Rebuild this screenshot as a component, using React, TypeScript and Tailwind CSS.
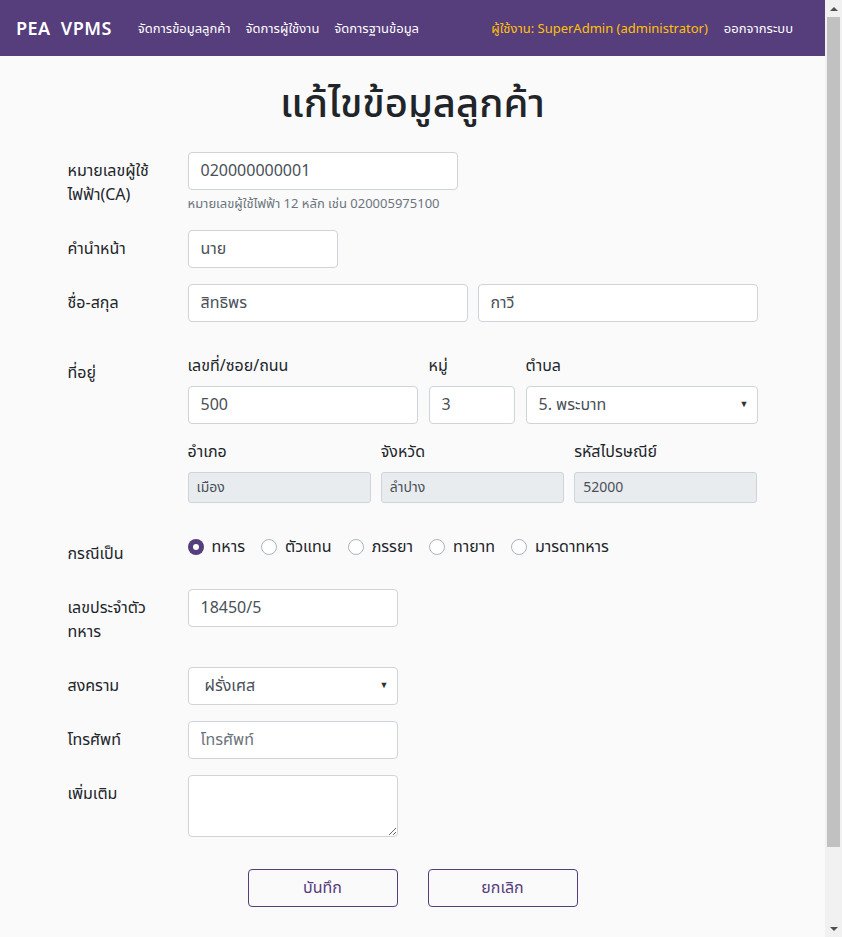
import React from 'react';

const font = { fontFamily: '"Noto Sans Thai", "Noto Sans", "Liberation Sans", sans-serif' };

const inputCls =
  'block w-full h-[38px] px-3 text-[16px] text-[#495057] bg-white border border-[#ced4da] rounded-[4px] outline-none';

function Label({ children }: { children: React.ReactNode }) {
  return <label className="w-[120px] shrink-0 px-[15px] pt-[7px] pb-[7px] text-[16px] leading-6 text-[#212529]">{children}</label>;
}

function Radio({ label, checked }: { label: string; checked?: boolean }) {
  return (
    <label className="flex items-center mr-4">
      {checked ? (
        <span className="w-4 h-4 rounded-full bg-[#563d7c] flex items-center justify-center">
          <span className="w-[6px] h-[6px] rounded-full bg-white" />
        </span>
      ) : (
        <span className="w-4 h-4 rounded-full bg-white border border-[#adb5bd]" />
      )}
      <span className="ml-2 text-[16px] leading-6 text-[#212529]">{label}</span>
    </label>
  );
}

function Select({ value, pad = 'pl-4' }: { value: string; pad?: string }) {
  return (
    <div className="relative">
      <div className={inputCls + ' flex items-center ' + pad}>{value}</div>
      <span className="absolute right-[9px] top-[12px] text-[9px] text-[#333]">▼</span>
    </div>
  );
}

function Scrollbar() {
  return (
    <div className="w-[17px] shrink-0 h-screen bg-[#f1f1f1] flex flex-col items-center">
      <div className="h-[17px] flex items-center justify-center">
        <div className="w-0 h-0 border-l-[4px] border-r-[4px] border-b-[4px] border-l-transparent border-r-transparent border-b-[#505050]" />
      </div>
      <div className="w-[13px] h-[830px] bg-[#c1c1c1]" />
      <div className="flex-1" />
      <div className="h-[17px] flex items-center justify-center">
        <div className="w-0 h-0 border-l-[4px] border-r-[4px] border-t-[4px] border-l-transparent border-r-transparent border-t-[#505050]" />
      </div>
    </div>
  );
}

export default function App() {
  return (
    <div className="flex h-screen overflow-hidden" style={font}>
      <div className="flex-1 min-w-0 bg-[#fafafa] overflow-hidden">
        <nav className="h-14 bg-[#563d7c] flex items-center px-4 pt-[3px]">
          <span className="text-white text-[18px] font-semibold tracking-wide mr-[26px]">PEA&nbsp; VPMS</span>
          <div className="flex gap-[15px] text-[13px] text-white">
            <span>จัดการข้อมูลลูกค้า</span>
            <span>จัดการผู้ใช้งาน</span>
            <span>จัดการฐานข้อมูล</span>
          </div>
          <div className="ml-auto flex gap-4 text-[13px] mr-4">
            <span className="text-[#ffc107]">ผู้ใช้งาน: SuperAdmin (administrator)</span>
            <span className="text-white">ออกจากระบบ</span>
          </div>
        </nav>

        <div className="w-[720px] mx-auto">
          <h1 className="text-center text-[40px] leading-[48px] font-medium text-[#212529] mt-[25px] mb-[23px]">
            แก้ไขข้อมูลลูกค้า
          </h1>

          <div className="flex mb-4">
            <Label>หมายเลขผู้ใช้ไฟฟ้า(CA)</Label>
            <div className="flex-1 px-[15px]">
              <div className="w-[270px]">
                <input className={inputCls} defaultValue="020000000001" />
              </div>
              <p className="mt-1 text-[13px] leading-5 text-[#6c757d]">หมายเลขผู้ใช้ไฟฟ้า 12 หลัก เช่น 020005975100</p>
            </div>
          </div>

          <div className="flex mb-4">
            <Label>คำนำหน้า</Label>
            <div className="flex-1 px-[15px]">
              <input className={inputCls + ' !w-[150px]'} defaultValue="นาย" />
            </div>
          </div>

          <div className="flex mb-8">
            <Label>ชื่อ-สกุล</Label>
            <div className="flex-1 px-[15px] grid grid-cols-2 gap-[10px]">
              <input className={inputCls} defaultValue="สิทธิพร" />
              <input className={inputCls} defaultValue="กาวี" />
            </div>
          </div>

          <div className="flex mb-8">
            <Label>ที่อยู่</Label>
            <div className="flex-1 px-[15px]">
              <div className="grid grid-cols-[230px_86px_1fr] gap-x-[11px]">
                <div>
                  <div className="text-[16px] leading-6 mb-2 text-[#212529]">เลขที่/ซอย/ถนน</div>
                  <input className={inputCls} defaultValue="500" />
                </div>
                <div>
                  <div className="text-[16px] leading-6 mb-2 text-[#212529]">หมู่</div>
                  <input className={inputCls} defaultValue="3" />
                </div>
                <div>
                  <div className="text-[16px] leading-6 mb-2 text-[#212529]">ตำบล</div>
                  <Select value="5. พระบาท" pad="pl-3" />
                </div>
              </div>
              <div className="grid grid-cols-3 gap-x-[10px] mt-4">
                {[
                  ['อำเภอ', 'เมือง'],
                  ['จังหวัด', 'ลำปาง'],
                  ['รหัสไปรษณีย์', '52000'],
                ].map(([l, v]) => (
                  <div key={l}>
                    <div className="text-[16px] leading-6 mb-2 text-[#212529]">{l}</div>
                    <div className="h-[31px] px-2 flex items-center text-[14px] text-[#495057] bg-[#e9ecef] border border-[#ced4da] rounded-[3px]">
                      {v}
                    </div>
                  </div>
                ))}
              </div>
            </div>
          </div>

          <div className="flex mb-4">
            <Label>กรณีเป็น</Label>
            <div className="flex-1 px-[15px] flex items-start">
              <Radio label="ทหาร" checked />
              <Radio label="ตัวแทน" />
              <Radio label="ภรรยา" />
              <Radio label="ทายาท" />
              <Radio label="มารดาทหาร" />
            </div>
          </div>

          <div className="flex mb-4">
            <Label>เลขประจำตัวทหาร</Label>
            <div className="flex-1 px-[15px]">
              <input className={inputCls + ' !w-[210px]'} defaultValue="18450/5" />
            </div>
          </div>

          <div className="flex mb-4">
            <Label>สงคราม</Label>
            <div className="flex-1 px-[15px]">
              <div className="w-[210px]">
                <Select value="ฝรั่งเศส" />
              </div>
            </div>
          </div>

          <div className="flex mb-4">
            <Label>โทรศัพท์</Label>
            <div className="flex-1 px-[15px]">
              <input className={inputCls + ' !w-[210px] placeholder:text-[#6c757d]'} placeholder="โทรศัพท์" />
            </div>
          </div>

          <div className="flex mb-8">
            <Label>เพิ่มเติม</Label>
            <div className="flex-1 px-[15px]">
              <textarea
                rows={2}
                className="block w-[210px] h-[62px] px-3 py-[6px] bg-white border border-[#ced4da] rounded-[4px] outline-none"
              />
            </div>
          </div>

          <div className="flex justify-center gap-[30px] pb-10">
            <button className="w-[150px] h-[38px] border border-[#563d7c] rounded-[4px] text-[16px] text-[#563d7c]">บันทึก</button>
            <button className="w-[150px] h-[38px] border border-[#563d7c] rounded-[4px] text-[16px] text-[#563d7c]">ยกเลิก</button>
          </div>
        </div>
      </div>
      <Scrollbar />
    </div>
  );
}
